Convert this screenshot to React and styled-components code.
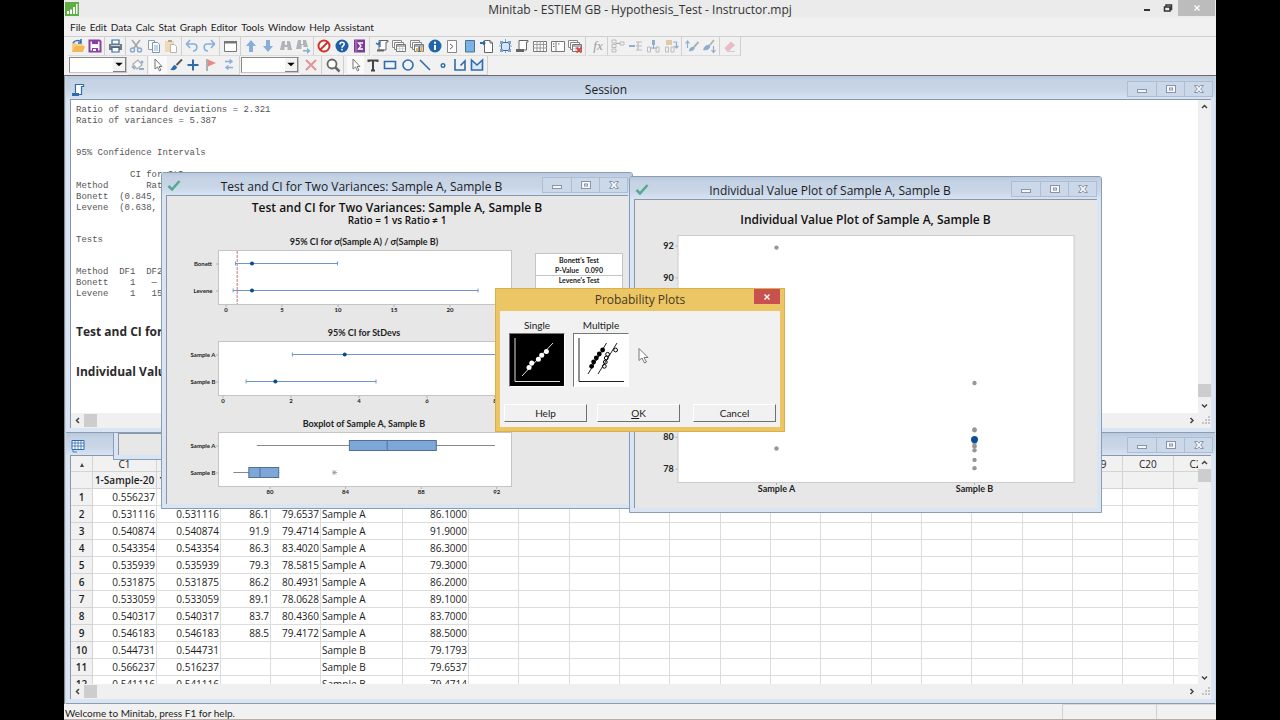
import React from "react";
import styled, { createGlobalStyle } from "styled-components";

const UI = `"Open Sans", "Noto Sans", sans-serif`;
const COMPACT = `Lato, "Open Sans", "Noto Sans", sans-serif`;

const Global = createGlobalStyle`
  * { box-sizing: border-box; }
  body { margin: 0; background: #000; font-family: ${UI}; color: #1c1c1c; }
  button, select { font-family: ${COMPACT}; color: inherit; }
`;

/* ---------- application frame ---------- */

const Screen = styled.div`
  height: 100vh;
  padding: 0 64px;
  background: #000;
`;
const Application = styled.div`
  height: 100%;
  display: flex;
  flex-direction: column;
  background: #f1f1f1;
  overflow: hidden;
`;
const TitleBar = styled.header`
  display: grid;
  grid-template-columns: 1fr auto 1fr;
  align-items: center;
  height: 18px;
  background: #ebebeb;
`;
const Logo = styled.svg`
  width: 14px;
  height: 14px;
  margin-left: 1px;
`;
const AppTitle = styled.h1`
  margin: 0;
  padding-top: 2px;
  font-size: 12px;
  line-height: 16px;
  font-weight: 400;
  color: #333;
`;
const AppControls = styled.div`
  display: flex;
  justify-content: flex-end;
  align-self: start;
`;
const AppControl = styled.button`
  width: ${(p) => (p.$close ? 37 : 21)}px;
  height: 16px;
  padding: 0;
  border: 0;
  margin-right: ${(p) => (p.$close ? 1 : 0)}px;
  background: ${(p) => (p.$close ? "#bcbcbc" : "transparent")};
  display: grid;
  place-items: center;
`;
const MenuBar = styled.nav`
  display: flex;
  height: 19px;
  padding: 0 4px;
  border-bottom: 1px solid #d0d0d0;
`;
const MenuItem = styled.button`
  padding: 0 2px;
  border: 0;
  background: none;
  font-size: 10px;
  line-height: 18px;
`;
const ToolRow = styled.div`
  display: flex;
  height: 19px;
  padding-left: 4px;
`;
const ToolGroup = styled.div`
  display: flex;
  align-items: center;
  width: ${(p) => p.$width}px;
  padding: 0 1px;
  border-right: 1px solid #cfcfcf;
  margin-right: ${(p) => (p.$end ? 2 : 0)}px;
  border-bottom: 1px solid #dcdcdc;
`;
const Tool = styled.button`
  flex: 1;
  height: 18px;
  padding: 0;
  border: 0;
  display: grid;
  place-items: center;
  background: ${(p) => (p.$active ? "#fafafa" : "transparent")};
  opacity: ${(p) => (p.$dim ? 0.5 : 1)};
  svg { width: 16px; height: 16px; display: block; }
`;
const Combo = styled.label`
  position: relative;
  display: block;
  width: 58px;
  height: 16px;
  margin: 1px 1px 0;
`;
const ComboSelect = styled.select`
  appearance: none;
  display: block;
  width: 100%;
  height: 100%;
  border: 1px solid #8a8a8a;
  border-right-color: #c4c4c4;
  border-bottom-color: #c4c4c4;
  border-radius: 0;
  background: #fff;
  font-size: 10px;
  padding: 0 14px 0 2px;
`;
const ComboArrow = styled.svg`
  position: absolute;
  right: 1px;
  top: 1px;
  width: 13px;
  height: 14px;
  background: #f3f3f3;
  border-right: 1px solid #808080;
  border-bottom: 1px solid #808080;
  pointer-events: none;
`;
const StatusBar = styled.footer`
  display: flex;
  height: 16px;
  border-bottom: 1px solid #b9ada3;
  padding-left: 1px;
  font-family: ${COMPACT};
  font-size: 10px;
  line-height: 18px;
`;
const StatusText = styled.span`
  flex: 1;
`;
const StatusCell = styled.span`
  width: ${(p) => p.$width}px;
  border-left: 1px solid #d0d0d0;
  border-top: 1px solid #d8d8d8;
`;

/* ---------- child windows ---------- */

const Desktop = styled.main`
  position: relative;
  flex: 1;
  min-height: 0;
  display: flex;
  flex-direction: column;
  border-top: 1px solid #6e6a70;
  border-left: 1px solid #8a8a90;
  padding: 0 1px 0 1px;
  background: #c9d6e6;
`;
const Frame = styled.section`
  display: flex;
  flex-direction: column;
  min-height: 0;
  background: #d9e5f2;
  border: 1px solid #8b9cb5;
  padding: 0 4px 4px;
`;
const DockedFrame = styled(Frame)`
  flex: ${(p) => p.$flex};
  border-width: 0 0 1px 0;
`;
const FloatingFrame = styled(Frame)`
  position: absolute;
  left: ${(p) => p.$left}px;
  top: ${(p) => p.$top}px;
  width: ${(p) => p.$width}px;
  height: ${(p) => p.$height}px;
  border-radius: 3px 3px 0 0;
`;
const CoveredFrame = styled(FloatingFrame)`
  border-top: 0;
  border-radius: 0;
`;
const FrameBar = styled.header`
  display: flex;
  align-items: center;
  height: ${(p) => p.$height || 23}px;
  margin: 0 -4px;
  padding: 2px ${(p) => (p.$docked ? 2 : 4)}px 0 5px;
  background: linear-gradient(#b9c8db, #c4d2e4 20%, #c7d5e7 60%, #d6e3f3);
  border-radius: 2px 2px 0 0;
`;
const FrameTitle = styled.h2`
  flex: 1;
  margin: 0;
  padding-top: 3px;
  text-align: center;
  font-size: 12px;
  line-height: 16px;
  font-weight: 400;
`;
const FrameIcon = styled.svg`
  width: 14px;
  height: 14px;
  margin-top: 2px;
`;
const FrameControls = styled.div`
  display: flex;
  height: 16px;
  border: 1px solid #adbdd4;
`;
const FrameControl = styled.button`
  width: 28px;
  padding: 0;
  border: 0;
  border-left: ${(p) => (p.$first ? 0 : 1)}px solid #adbdd4;
  background: #cbd8e9;
  display: grid;
  place-items: center;
`;
const FrameBody = styled.div`
  flex: 1;
  min-height: 0;
  display: flex;
  flex-direction: column;
  border-top: 1px solid #8b96a6;
  border-left: 1px solid #8b96a6;
  background: ${(p) => p.$bg || "#fff"};
`;
const Split = styled.div`
  flex: 1;
  min-height: 0;
  display: flex;
`;
const Rail = styled.div`
  display: flex;
  flex-direction: ${(p) => (p.$vertical ? "column" : "row")};
  align-items: center;
  justify-content: space-between;
  width: ${(p) => (p.$vertical ? "13px" : "auto")};
  height: ${(p) => (p.$vertical ? "auto" : "15px")};
  background: #f0f0f0;
`;
const RailEnd = styled.div`
  display: flex;
  flex-direction: ${(p) => (p.$vertical ? "column" : "row")};
`;
const RailButton = styled.button`
  width: 13px;
  height: ${(p) => (p.$tall ? 16 : 13)}px;
  padding: 0;
  border: 0;
  background: none;
  display: grid;
  place-items: center;
`;
const Thumb = styled.div`
  width: 13px;
  height: 13px;
  background: #cdcdcd;
`;

/* ---------- session ---------- */

const SessionText = styled.div`
  flex: 1;
  min-width: 0;
  padding: 5px 5px 0;
  overflow: hidden;
  color: #555;
`;
const Output = styled.pre`
  margin: ${(p) => p.$gap}px 0 0;
  font: 9px/11px "Liberation Mono", monospace;
`;
const OutputHeading = styled.h3`
  margin: ${(p) => p.$gap}px 0 0;
  font-size: 12px;
  line-height: 16px;
  font-weight: 700;
  color: #2b2b2b;
`;

/* ---------- worksheet ---------- */

const SheetClip = styled.div`
  flex: 1;
  min-width: 0;
  overflow: hidden;
`;
const Sheet = styled.table`
  table-layout: fixed;
  width: calc(100% + 26px);
  border-collapse: separate;
  border-spacing: 0;
  font-size: 10px;
  line-height: 16px;
`;
const Cell = styled.td`
  height: 17px;
  padding: 0 1px;
  overflow: hidden;
  white-space: nowrap;
  text-align: ${(p) => (p.$text ? "left" : "right")};
  border-right: 1px solid #dcdcdc;
  border-bottom: 1px solid #dcdcdc;
`;
const HeadCell = styled.th`
  height: ${(p) => (p.$top ? 16 : 17)}px;
  padding: ${(p) => (p.$top ? "2px 0 0" : 0)};
  overflow: hidden;
  white-space: nowrap;
  text-align: center;
  line-height: ${(p) => (p.$top ? 13 : 16)}px;
  font-weight: ${(p) => (p.$strong ? 600 : 400)};
  background: #f1f1f1;
  border-right: 1px solid #d4d4d4;
  border-bottom: 1px solid #d4d4d4;
`;
const Corner = styled.svg`
  width: 6px;
  height: 6px;
`;

/* ---------- dialog ---------- */

const Dialog = styled.div`
  position: absolute;
  left: 430px;
  top: 212px;
  width: 290px;
  display: flex;
  flex-direction: column;
  background: #ecc664;
  border: 1px solid #d9b04a;
  padding: 0 4px 4px;
`;
const DialogBar = styled.header`
  display: flex;
  height: 22px;
  padding-left: 26px;
`;
const DialogTitle = styled.h2`
  flex: 1;
  margin: 0;
  text-align: center;
  font-size: 12px;
  line-height: 22px;
  font-weight: 400;
  color: #453a1e;
`;
const DialogClose = styled.button`
  width: 26px;
  height: 15px;
  padding: 0;
  border: 0;
  background: #c8504f;
  display: grid;
  place-items: center;
`;
const DialogBody = styled.div`
  background: #f1f1f1;
  padding: 6px 4px 5px;
`;
const Choices = styled.div`
  display: flex;
  gap: 8px;
  padding-left: 5px;
`;
const Choice = styled.label`
  display: flex;
  flex-direction: column;
  align-items: center;
  width: 56px;
  font-family: ${COMPACT};
  font-size: 10px;
  line-height: 16px;
`;
const ChoiceButton = styled.button`
  width: 56px;
  height: 54px;
  padding: 0;
  border: 1px solid #777;
  border-right-color: #fff;
  border-bottom-color: #fff;
  background: ${(p) => (p.$on ? "#000" : "#fff")};
  svg { display: block; width: 54px; height: 52px; }
`;
const DialogActions = styled.div`
  display: flex;
  gap: 10px;
  margin-top: 17px;
`;
const Action = styled.button`
  width: 83px;
  height: 18px;
  padding: 0;
  border: 1px solid #fff;
  border-right-color: #707070;
  border-bottom-color: #707070;
  background: #f1f1f1;
  font-size: 10px;
  line-height: 16px;
  &:last-child { margin-left: auto; }
`;
const Pointer = styled.svg`
  position: absolute;
  left: 572px;
  top: 271px;
  width: 16px;
  height: 18px;
`;
const Chart = styled.svg`
  display: block;
  width: 100%;
  height: 100%;
  text { font-family: ${COMPACT}; font-weight: 700; fill: #222; text-anchor: middle; }
  .title { font-family: ${UI}; font-weight: 600; fill: #111; }
`;

/* ---------- icons ---------- */

const BLUE = "#2f6cad";
const PALE = "#85aedb";
const GRAY = "#666";
const line = (stroke, w = 1.3) => ({ fill: "none", stroke, strokeWidth: w });
const sheetIcon = (
  <>
    <path d="M1.500 2.500h9v7h-9z" {...line("#888", 1)} fill="#fff" />
    <path d="M3.500 4.500h9v7h-9z" {...line("#888", 1)} fill="#fff" />
    <path d="M5.500 6.500h9v7h-9z" {...line("#777", 1)} fill="#fff" />
    <path d="M6 8h8" {...line("#999", 1.500)} />
    <path d="M6 10.800h8M8.700 8v5M11.500 8v5" {...line("#bbb", 0.700)} />
  </>
);
const pointerPath = <path d="M5 2v10l2.500-2 2 4 1.500-1-2-3.500h3z" {...line("#777", 1)} fill="#fff" />;

const ICONS = {
  open: <><path d="M2 14V5h4l1 1h6v3" fill="#f7d083" /><path d="M2 14l3-6h10l-2 6z" fill="#f0b955" /><path d="M3 5c2-3 6-3 8-1M11 1v4H8" {...line(BLUE, 1.500)} /></>,
  save: <><path d="M2.500 2.500h10l1 1v10h-11z" {...line("#8a3fa6", 2)} fill="#fff" /><path d="M5 2h6v4H5zM5 10h6v4H5z" fill="#8a3fa6" /><path d="M6 11h3v2H6z" fill="#fff" /></>,
  print: <><path d="M5 2h7v4H5z" {...line(BLUE, 1.200)} fill="#fff" /><path d="M2 6h13v6H2z" fill="#777" /><path d="M4 7.500h9" {...line("#ccc", 1)} /><path d="M5 9.500h7V14H5z" {...line(BLUE, 1.200)} fill="#fff" /></>,
  cut: <><path d="M4 2l6 8M12 2l-6 8" {...line("#a5a5a5", 1.700)} /><circle cx="4.500" cy="12" r="2" {...line("#86aad0", 1.500)} /><circle cx="11.500" cy="12" r="2" {...line("#86aad0", 1.500)} /></>,
  copy: <><path d="M2.500 2.500h6v9h-6z" {...line("#8a9db3", 1)} fill="#fff" /><path d="M6.500 4.500h5l2 2v8h-7z" {...line("#7797bb", 1)} fill="#fff" /><path d="M8 8h4M8 10h4M8 12h4" {...line("#86aad0", 1)} /></>,
  paste: <><path d="M2 3h9v11H2z" fill="#f0d9b3" /><path d="M5 2h4v2H5z" fill="#aaa" /><path d="M7.500 6.500h4l2 2v6h-6z" {...line("#b5b5b5", 1)} fill="#fff" /></>,
  undo: <><path d="M3 6h7c4 0 4 7-1 7" {...line(PALE, 1.600)} /><path d="M6 2L2.500 6 6 10" {...line(PALE, 1.600)} /></>,
  redo: <><path d="M13 6H6c-4 0-4 7 1 7" {...line(PALE, 1.600)} /><path d="M10 2l3.500 4L10 10" {...line(PALE, 1.600)} /></>,
  window: <><path d="M2.500 3.500h12v10h-12z" {...line("#777", 1)} fill="#fff" /><path d="M2 3h13v2.500H2z" fill="#777" /></>,
  up: <path d="M8 2l5 6h-3v6H6V8H3z" fill={PALE} />,
  down: <path d="M8 14l5-6h-3V2H6v6H3z" fill={PALE} />,
  find: <path d="M4 3h3v4h2V3h3l2 9H9.500V9h-3v3H2z" fill="#b0b3b8" />,
  findNext: <><path d="M3 2h3v4h2V2h3l2 7H8.500V7h-2v4H1z" fill="#b0b3b8" /><path d="M8 12h4V9.500L15.500 13 12 16v-2.500H8z" fill={PALE} /></>,
  stop: <><circle cx="8" cy="8" r="5.500" {...line("#cf3329", 2)} fill="#fff" /><path d="M4 12l8-8" {...line("#cf3329", 2)} /></>,
  help: <><circle cx="8" cy="8" r="6.500" fill="#1f5fa6" /><path d="M6 6.500c0-3 4.200-3 4.200-.4C10.200 8 8 7.800 8 9.800M8 10.800v1.700" {...line("#fff", 1.600)} /></>,
  sigma: <><path d="M3 1.500h11v13H3z" fill="#7d3c98" /><path d="M5 2v12" {...line("#b78fca", 1)} /><path d="M12 5H7.500l2.500 3-2.500 3H12" {...line("#fff", 1.300)} /></>,
  session: <><path d="M5 2.500h9v1.500h-2v8H5z" {...line(GRAY, 1)} fill="#fff" /><path d="M2 5l2 1.500L6 4v5" {...line(BLUE, 1.300)} /><path d="M3 11.500h7v2H3z" fill={GRAY} /></>,
  sheets: sheetIcon,
  graphs: <>{sheetIcon}<path d="M6 9h8v4H6z" fill="#fff" /><path d="M7 14v-4h1.800v4zM11.800 14v-5h1.800v5z" fill="#e7a93b" /><path d="M9.400 14V8.500h1.800V14z" fill={BLUE} /></>,
  info: <><circle cx="8" cy="8" r="6.500" fill="#1f66ac" /><path d="M8 7v5M8 3.800v2" {...line("#fff", 2)} /></>,
  prompt: <><path d="M3.500 2.500h9v12h-9z" {...line("#888", 1)} fill="#fff" /><path d="M6 6l3 2.500L6 11" {...line(GRAY, 1)} /></>,
  book: <><path d="M3.500 2.500h9v11.500h-9z" {...line("#4a7099", 1)} fill="#7ab2e6" /></>,
  insert: <><path d="M5.500 2.500h5.500l2.500 2.500v9.500h-8z" {...line(GRAY, 1)} fill="#fff" /><path d="M11 2.500V5h2.500" {...line(GRAY, 1)} /><path d="M1 4h3V2.500L7 5 4 7.500V6H1z" fill={BLUE} /></>,
  select: <><path d="M4.500 4.500h8v8h-8z" {...line(BLUE, 1)} fill="#d5e5f5" /><path d="M3 3h3v3H3zM11 3h3v3h-3zM3 11h3v3H3zM11 11h3v3h-3z" fill="#7fa3cb" /><path d="M2 8h3M12 8h3M8.500 1v3M8.500 13v2" {...line("#7fa3cb", 1)} /></>,
  script: <><path d="M5 2.500h9v1.500h-1.500v8H5z" {...line(GRAY, 1)} fill="#fff" /><path d="M2 11h8v3H2z" fill={GRAY} /></>,
  grid: <><path d="M1.500 3.500h13v10h-13z" {...line("#777", 1)} fill="#fff" /><path d="M1 6.500h14M1 10h14M5 3v10M8.200 3v10M11.500 3v10" {...line("#999", 1)} /></>,
  pane: <><path d="M1.500 3.500h13v10h-13zM6 3.500v10" {...line("#777", 1)} fill="#fff" /><path d="M3 6h1.500M3 8.500h1.500M8 6h1.500" {...line(GRAY, 1.200)} /></>,
  closeAll: <>{sheetIcon}<path d="M9.500 9.500l5 5M14.500 9.500l-5 5" {...line("#d04545", 1.800)} /></>,
  fx: <text x="8" y="12" textAnchor="middle" fontSize="13" fontStyle="italic" fontFamily="Liberation Serif, serif" fill="#999">fx</text>,
  tree: <><path d="M2 2h4v3H2zM2 6.500h4v3H2zM2 11h4v3H2zM10 4h4v3h-4z" {...line("#888", 1)} /><path d="M6 5.500h4" {...line(BLUE, 1)} /></>,
  merge: <><path d="M1 7h6v2H1z" fill={BLUE} /><path d="M8 4h6M8 8h6M8 12h6M10 4v8" {...line("#888", 1.200)} /></>,
  branch: <><path d="M7 2h3v5H7z" fill={BLUE} /><path d="M2.500 9h3v5h-3zM11 9h3v5h-3z" {...line("#888", 1)} /><path d="M8.500 6v5M5 10h7" {...line(BLUE, 1)} /></>,
  swap: <><path d="M3 2h6v5H3z" fill="#c9a468" /><path d="M2.500 9h3v5h-3zM8 9h3v5H8z" {...line("#888", 1)} /><path d="M10 4h3.500v6M11.500 8l2 2 2-2" {...line(BLUE, 1.200)} /></>,
  brushUp: <><path d="M14.500 4L10 9" {...line("#777", 2)} /><path d="M5 13c0-3 3-5 5.500-4 1 2-2 5-5.500 4z" fill={BLUE} /><path d="M3.500 10V3.500M1.500 5.500l2-2.500 2 2.500" {...line(BLUE, 1.200)} /></>,
  brushDown: <><path d="M13 2L9 7" {...line("#777", 2)} /><path d="M2 12c1-4 4-6 7-5 1 4-3 6-7 5z" fill={BLUE} /><path d="M12.500 8v6M10.500 12l2 2.500 2-2.500" {...line(BLUE, 1.200)} /></>,
  eraser: <><path d="M2.500 10L9 3.500l4 3.500-6 6H4.500z" fill="#e58a99" /><path d="M5 13.500h8" {...line("#aaa", 1)} /></>,
  bucket: <><path d="M3 7l5-4 4 5-5 4z" {...line("#666", 1.200)} fill="#fff" /><path d="M2 9l3 3M9 12h5" {...line(BLUE, 2)} /><circle cx="12" cy="5" r="1.500" fill={BLUE} /></>,
  cursor: pointerPath,
  brush: <><path d="M14 2.500L8.500 8" {...line("#555", 2)} /><path d="M2 12.500c2 0 2-4 5-4.500l2 2c0 3-4 4-7 2.500z" fill={BLUE} /></>,
  plus: <path d="M8 2.500v11M2.500 8h11" {...line(BLUE, 2)} />,
  flag: <><path d="M4 2v12" {...line("#999", 1.500)} /><path d="M5 2.500l8 3.500-8 3.500z" fill="#e58a8a" /></>,
  exchange: <path d="M4 4.500h7M8.500 2.500l2.500 2-2.500 2M12 10.500H5M7.500 8.500L5 10.500l2.500 2" {...line(PALE, 1.400)} />,
  cross: <path d="M3 3l10 10M13 3L3 13" {...line("#e39494", 2)} />,
  zoom: <><circle cx="7" cy="7" r="4.500" {...line(GRAY, 1.800)} fill="#fff" /><path d="M10.500 10.500L14.500 14.500" {...line(GRAY, 2.500)} /></>,
  letter: <path d="M3.500 5V3.500h9V5M8 3v10.500M6 13.500h4" {...line("#444", 2)} />,
  rect: <path d="M2.500 4.500h11v7h-11z" {...line(BLUE, 1.600)} fill="#eef5fc" />,
  circle: <circle cx="8" cy="8" r="5" {...line(BLUE, 1.600)} fill="#eef5fc" />,
  slash: <path d="M3 3l10 10" {...line(BLUE, 1.600)} />,
  dot: <circle cx="8" cy="8.500" r="1.800" {...line(BLUE, 1.400)} fill="#fff" />,
  polyline: <path d="M3 2v11h10V4L8.500 8.500" {...line(BLUE, 1.600)} />,
  polygon: <path d="M2.500 3v10h11V3L8 8z" {...line(BLUE, 1.600)} fill="#dbe9f7" />,
};

const FILE_GROUPS = [
  { width: 37, tools: ["open", "save"] },
  { width: 21, tools: ["print"] },
  { width: 56, tools: ["cut", "copy", "paste"] },
  { width: 38, tools: ["undo", "redo"] },
  { width: 21, tools: ["window"] },
  { width: 73, tools: ["up", "down", "find", "findNext"] },
  { width: 56, tools: ["stop", "help", "sigma"], end: true },
  { width: 214, tools: ["session", "sheets", "graphs", "info", "prompt", "book", "insert", "select", "script", "grid", "pane", "closeAll"], end: true },
  { width: 20, tools: ["fx"] },
  { width: 74, tools: ["tree", "merge", "branch", "swap"], dim: true },
  { width: 38, tools: ["brushUp", "brushDown"], dim: true },
  { width: 21, tools: ["eraser"], dim: true },
];

function Tools({ width, tools, end, dim, active }) {
  return (
    <ToolGroup $width={width} $end={end}>
      {tools.map((name) => (
        <Tool key={name} aria-label={name} $dim={dim} $active={active === name}>
          <svg viewBox="0 0 16 16">{ICONS[name]}</svg>
        </Tool>
      ))}
    </ToolGroup>
  );
}

function ComboBox({ label }) {
  return (
    <Combo>
      <ComboSelect aria-label={label} />
      <ComboArrow viewBox="0 0 12 14"><path d="M2 5h8l-4 4z" fill="#000" /></ComboArrow>
    </Combo>
  );
}

/* ---------- window pieces ---------- */

function WindowControls() {
  const glyph = { fill: "#f4f7fb", stroke: "#8b94a6", strokeWidth: 1 };
  return (
    <FrameControls>
      <FrameControl aria-label="Minimize" $first>
        <svg width="12" height="10"><rect x="1.500" y="5.500" width="9" height="3" {...glyph} /></svg>
      </FrameControl>
      <FrameControl aria-label="Maximize">
        <svg width="12" height="10"><rect x="1.500" y="1.500" width="9" height="7" {...glyph} /><rect x="4.500" y="4" width="3" height="2" {...glyph} /></svg>
      </FrameControl>
      <FrameControl aria-label="Close">
        <svg width="12" height="10"><path d="M1.500 1.500h3L6 3.200l1.500-1.700h3L7.800 5l2.700 3.500h-3L6 6.800 4.500 8.500h-3L4.200 5z" {...glyph} /></svg>
      </FrameControl>
    </FrameControls>
  );
}

const ARROWS = {
  left: "M6 2L3.500 4.500 6 7",
  right: "M3.500 2L6 4.500 3.500 7",
  up: "M2 6l2.500-2.500L7 6",
  down: "M2 3.500L4.500 6 7 3.500",
};
function ArrowButton({ dir, tall }) {
  return (
    <RailButton aria-label={`Scroll ${dir}`} $tall={tall}>
      <svg width="9" height="9"><path d={ARROWS[dir]} {...line("#444", 1.500)} /></svg>
    </RailButton>
  );
}
function BottomRail() {
  return (
    <Rail>
      <RailEnd><ArrowButton dir="left" /><Thumb /></RailEnd>
      <RailEnd>
        <ArrowButton dir="right" />
        <svg width="13" height="13"><path d="M10 3h2M7 6h2M10 6h2M4 9h2M7 9h2M10 9h2" stroke="#c4c4c4" strokeWidth="2" /></svg>
      </RailEnd>
    </Rail>
  );
}
function SideRail({ atEnd }) {
  return (
    <Rail $vertical>
      <RailEnd $vertical><ArrowButton dir="up" />{!atEnd && <Thumb />}</RailEnd>
      <RailEnd $vertical>{atEnd && <Thumb />}<ArrowButton dir="down" tall={atEnd} /></RailEnd>
    </Rail>
  );
}
const Check = () => (
  <FrameIcon viewBox="0 0 14 14"><path d="M1.500 7L5 10.500 12.500 2" {...line("#56a98f", 2.500)} /></FrameIcon>
);

/* ---------- graphs ---------- */

function Panel({ y, title, labels, ticks, scale, children }) {
  return (
    <g transform={`translate(51 ${y})`}>
      <text x="146" y="-5" fontSize="9">{title}</text>
      <rect x="0.500" y="0.500" width="293" height="54" fill="#fff" stroke="#c4c4c4" />
      {labels.map((label, i) => (
        <g key={label}>
          <text x="-15" y={16 + i * 27} fontSize="6">{label}</text>
          <path d={`M-2 ${14 + i * 27}h2`} stroke="#b0b0b0" />
        </g>
      ))}
      {ticks.map((t) => (
        <g key={t}>
          <path d={`M${scale(t)} 55v2`} stroke="#b0b0b0" />
          <text x={scale(t)} y="62" fontSize="6">{t}</text>
        </g>
      ))}
      {children}
    </g>
  );
}
function Interval({ scale, y, from, to, at }) {
  return (
    <g>
      <path d={`M${scale(from)} ${y}H${scale(to)}M${scale(from)} ${y - 2}v4M${scale(to)} ${y - 2}v4`} stroke="#6f98c8" fill="none" />
      <circle cx={scale(at)} cy={y} r="2" fill="#0b4a8c" />
    </g>
  );
}
function Box({ scale, y, low, q1, median, q3, high }) {
  return (
    <g stroke="#55708f">
      <path d={`M${scale(low)} ${y}H${scale(high)}`} stroke="#888" />
      <rect x={scale(q1)} y={y - 5} width={scale(q3) - scale(q1)} height="10" fill="#7da7d9" />
      <path d={`M${scale(median)} ${y - 5}v10`} />
    </g>
  );
}

function VariancesChart() {
  const ratio = (v) => 8 + v * 11.2;
  const dev = (v) => 5 + v * 34;
  const value = (v) => 52 + (v - 80) * 18.9;
  const samples = ["Sample A", "Sample B"];
  return (
    <Chart viewBox="0 0 461 308" preserveAspectRatio="xMidYMin meet">
      <text className="title" x="230" y="16" fontSize="12">Test and CI for Two Variances: Sample A, Sample B</text>
      <text className="title" x="230" y="28" fontSize="10">Ratio = 1 vs Ratio ≠ 1</text>
      <Panel y={54} title="95% CI for σ(Sample A) / σ(Sample B)" labels={["Bonett", "Levene"]} ticks={[0, 5, 10, 15, 20]} scale={ratio}>
        <path d={`M${ratio(1)} 1v53`} stroke="#c07880" strokeDasharray="3 1" />
        <Interval scale={ratio} y={13.500} from={0.85} to={9.95} at={2.32} />
        <Interval scale={ratio} y={40.500} from={0.64} to={22.500} at={2.32} />
      </Panel>
      <Panel y={145} title="95% CI for StDevs" labels={samples} ticks={[0, 2, 4, 6, 8]} scale={dev}>
        <Interval scale={dev} y={13.500} from={2.04} to={8.3} at={3.58} />
        <Interval scale={dev} y={40.500} from={0.68} to={4.5} at={1.54} />
      </Panel>
      <Panel y={236} title="Boxplot of Sample A, Sample B" labels={samples} ticks={[80, 84, 88, 92]} scale={value}>
        <Box scale={value} y={13.500} low={79.3} q1={84.2} median={86.2} q3={88.8} high={91.9} />
        <Box scale={value} y={40.500} low={78.06} q1={78.88} median={79.47} q3={80.46} high={80.49} />
        <path d={`M${value(83.4) - 2} 40.500h5M${value(83.4)} 38v5M${value(83.4) - 2} 38.500l4 4M${value(83.4) + 2} 38.500l-4 4`} stroke="#999" strokeWidth="0.800" />
      </Panel>
      <rect x="368.500" y="57.500" width="87" height="46" fill="#fff" stroke="#c4c4c4" />
      <path d="M368 79.500h88" stroke="#c4c4c4" />
      <g fontSize="7">
        <text x="412" y="67">Bonett's Test</text>
        <text x="400" y="77">P-Value</text>
        <text x="427" y="77">0.090</text>
        <text x="412" y="87">Levene's Test</text>
      </g>
    </Chart>
  );
}

const SAMPLE_A = [86.1, 91.9, 86.3, 79.3, 86.2, 89.1, 83.7, 88.5];
const SAMPLE_B = [79.1793, 79.6537, 79.4714, 83.402, 78.5815, 80.4931, 78.0628, 80.436, 79.4172];

function ValuePlot() {
  const y = (v) => 46 + (92 - v) * 15.94;
  return (
    <Chart viewBox="0 0 461 308" preserveAspectRatio="xMidYMin meet">
      <text className="title" x="230" y="24" fontSize="12">Individual Value Plot of Sample A, Sample B</text>
      <rect x="42.500" y="35.500" width="396" height="247" fill="#fff" stroke="#cccccc" />
      {[92, 90, 88, 86, 84, 82, 80, 78].map((t) => (
        <g key={t}>
          <path d={`M40 ${y(t)}h2`} stroke="#b0b0b0" />
          <text x="33" y={y(t) + 3} fontSize="9">{t}</text>
        </g>
      ))}
      {[["Sample A", 141, SAMPLE_A], ["Sample B", 339, SAMPLE_B]].map(([name, x, data]) => (
        <g key={name}>
          <path d={`M${x} 283v2`} stroke="#b0b0b0" />
          <text x={x} y="292" fontSize="9">{name}</text>
          {data.map((v) => <circle key={v} cx={x} cy={y(v)} r="2.200" fill="#969696" />)}
        </g>
      ))}
      <circle cx="141" cy={y(86.4)} r="3.500" fill="#0a4f9c" />
      <circle cx="339" cy={y(79.86)} r="3.500" fill="#0a4f9c" />
    </Chart>
  );
}

/* ---------- worksheet data ---------- */

const COLUMN_WIDTHS = [22, 64, 64, 50, 50, 82, 66];
const COLUMN_NAMES = ["C1", "C2", "C3", "C4", "C5-T", "C6", "C7", "C8", "C9", "C10", "C11", "C12", "C13", "C14", "C15", "C16", "C17", "C18", "C19", "C20", "C21"];
const ROWS = [
  ["0.556237", "0.556237", "79.3", "79.1793", "Sample A", "79.3000"],
  ["0.531116", "0.531116", "86.1", "79.6537", "Sample A", "86.1000"],
  ["0.540874", "0.540874", "91.9", "79.4714", "Sample A", "91.9000"],
  ["0.543354", "0.543354", "86.3", "83.4020", "Sample A", "86.3000"],
  ["0.535939", "0.535939", "79.3", "78.5815", "Sample A", "79.3000"],
  ["0.531875", "0.531875", "86.2", "80.4931", "Sample A", "86.2000"],
  ["0.533059", "0.533059", "89.1", "78.0628", "Sample A", "89.1000"],
  ["0.540317", "0.540317", "83.7", "80.4360", "Sample A", "83.7000"],
  ["0.546183", "0.546183", "88.5", "79.4172", "Sample A", "88.5000"],
  ["0.544731", "0.544731", "", "", "Sample B", "79.1793"],
  ["0.566237", "0.516237", "", "", "Sample B", "79.6537"],
  ["0.541116", "0.541116", "", "", "Sample B", "79.4714"],
];

function Worksheet() {
  return (
    <Sheet>
      <colgroup>
        {["row", ...COLUMN_NAMES].map((c, i) => <col key={c} width={COLUMN_WIDTHS[i]} />)}
      </colgroup>
      <thead>
        <tr>
          <HeadCell $top><Corner viewBox="0 0 6 6"><path d="M3 1l2 4H1z" fill="#444" /></Corner></HeadCell>
          {COLUMN_NAMES.map((c) => <HeadCell key={c} $top>{c}</HeadCell>)}
        </tr>
        <tr>
          <HeadCell />
          {COLUMN_NAMES.map((c, i) => <HeadCell key={c} $strong>{i < 2 ? "1-Sample-20" : "\u00a0"}</HeadCell>)}
        </tr>
      </thead>
      <tbody>
        {ROWS.map((row, r) => (
          <tr key={r}>
            <HeadCell scope="row" $strong>{r + 1}</HeadCell>
            {COLUMN_NAMES.map((c, i) => <Cell key={c} $text={i === 4}>{row[i]}</Cell>)}
          </tr>
        ))}
      </tbody>
    </Sheet>
  );
}

/* ---------- page ---------- */

const MENUS = ["File", "Edit", "Data", "Calc", "Stat", "Graph", "Editor", "Tools", "Window", "Help", "Assistant"];

export default function App() {
  return (
    <Screen>
      <Global />
      <Application>
        <TitleBar>
          <Logo viewBox="0 0 14 14">
            <rect width="14" height="14" fill="#5fae45" />
            <path d="M2 9h2v3H2zM5 7.500h2V12H5zM8 5h2v7H8zM11 2h1.500v10H11z" fill="#fff" />
          </Logo>
          <AppTitle>Minitab - ESTIEM GB - Hypothesis_Test - Instructor.mpj</AppTitle>
          <AppControls>
            <AppControl aria-label="Minimize"><svg width="10" height="8"><path d="M2 6h6" stroke="#333" strokeWidth="2" /></svg></AppControl>
            <AppControl aria-label="Restore"><svg width="10" height="8"><path d="M1.500 3h5.500v4H1.500zM3 3V1h5.500v4.500H7" {...line("#333", 1.500)} /></svg></AppControl>
            <AppControl aria-label="Close" $close><svg width="8" height="8"><path d="M1.500 1.500l5 5M6.500 1.500l-5 5" {...line("#fff", 1.300)} /></svg></AppControl>
          </AppControls>
        </TitleBar>
        <MenuBar>{MENUS.map((m) => <MenuItem key={m}>{m}</MenuItem>)}</MenuBar>
        <ToolRow>{FILE_GROUPS.map((g) => <Tools key={g.tools[0]} {...g} />)}</ToolRow>
        <ToolRow>
          <ComboBox label="Fill pattern" />
          <Tools width={20} tools={["bucket"]} dim />
          <Tools width={92} tools={["cursor", "brush", "plus", "flag", "exchange"]} active="cursor" />
          <ComboBox label="Item" />
          <Tools width={22} tools={["cross"]} />
          <Tools width={22} tools={["zoom"]} end />
          <Tools width={142} tools={["cursor", "letter", "rect", "circle", "slash", "dot", "polyline", "polygon"]} active="cursor" />
        </ToolRow>

        <Desktop>
          <DockedFrame $flex="0 0 357px">
            <FrameBar $docked>
              <FrameIcon viewBox="0 0 14 14">
                <path d="M4.500 1.500h8v2h-2v8h-6z" {...line(BLUE, 1.200)} fill="#fff" />
                <path d="M1 10h7v3H1z" fill={BLUE} />
              </FrameIcon>
              <FrameTitle>Session</FrameTitle>
              <WindowControls />
            </FrameBar>
            <FrameBody>
              <Split>
                <SessionText>
                  <Output $gap={0}>{"Ratio of standard deviations = 2.321\nRatio of variances = 5.387"}</Output>
                  <Output $gap={21}>95% Confidence Intervals</Output>
                  <Output $gap={11}>{"          CI for StDev\nMethod       Ratio\nBonett  (0.845, 9.951)\nLevene  (0.638, 22.475)"}</Output>
                  <Output $gap={21}>Tests</Output>
                  <Output $gap={21}>{"Method  DF1  DF2\nBonett    1   —\nLevene    1   15"}</Output>
                  <OutputHeading $gap={24}>Test and CI for Two Variances: Sample A, Sample B</OutputHeading>
                  <OutputHeading $gap={24}>Individual Value Plot of Sample A, Sample B</OutputHeading>
                </SessionText>
                <SideRail atEnd />
              </Split>
              <BottomRail />
            </FrameBody>
          </DockedFrame>

          <DockedFrame $flex="1 1 0">
            <FrameBar $height={22} $docked>
              <FrameIcon viewBox="0 0 14 14">
                <path d="M1 1.500h12v9H1z" {...line(BLUE, 1)} fill="#fff" />
                <path d="M1 4h12M1 7h12M4 1v10M7 1v10M10 1v10M2 11v2h4" {...line(BLUE, 0.800)} />
              </FrameIcon>
              <FrameTitle />
              <WindowControls />
            </FrameBar>
            <FrameBody>
              <Split>
                <SheetClip><Worksheet /></SheetClip>
                <SideRail />
              </Split>
              <BottomRail />
            </FrameBody>
          </DockedFrame>

          <CoveredFrame $left={48} $top={357} $width={472} $height={27}>
            <FrameBody $bg="#e7e7e7" />
          </CoveredFrame>

          <FloatingFrame $left={96} $top={96} $width={472} $height={337}>
            <FrameBar $height={22}>
              <Check />
              <FrameTitle>Test and CI for Two Variances: Sample A, Sample B</FrameTitle>
              <WindowControls />
            </FrameBar>
            <FrameBody $bg="#e7e7e7"><VariancesChart /></FrameBody>
          </FloatingFrame>

          <FloatingFrame $left={564} $top={100} $width={473} $height={337}>
            <FrameBar $height={22}>
              <Check />
              <FrameTitle>Individual Value Plot of Sample A, Sample B</FrameTitle>
              <WindowControls />
            </FrameBar>
            <FrameBody $bg="#e7e7e7"><ValuePlot /></FrameBody>
          </FloatingFrame>

          <Dialog role="dialog" aria-label="Probability Plots">
            <DialogBar>
              <DialogTitle>Probability Plots</DialogTitle>
              <DialogClose aria-label="Close">
                <svg width="8" height="8"><path d="M1.500 1.500l5 5M6.500 1.500l-5 5" {...line("#fff", 1.400)} /></svg>
              </DialogClose>
            </DialogBar>
            <DialogBody>
              <Choices>
                <Choice>
                  Single
                  <ChoiceButton $on aria-pressed="true">
                    <svg viewBox="1 1 54 52">
                      <path d="M6 5v43.500h45M13 43l31-33" {...line("#ddd", 1)} />
                      {[[20, 34.5], [22.7, 30], [29.4, 26.3], [32.7, 22.3], [37.4, 18.4]].map(([x, y]) => <circle key={x} cx={x} cy={y} r="2.500" fill="#fff" />)}
                    </svg>
                  </ChoiceButton>
                </Choice>
                <Choice>
                  Multiple
                  <ChoiceButton aria-pressed="false">
                    <svg viewBox="1 1 54 52">
                      <path d="M6 5v43.500h45M15 41l18.500-31M25 41l19-31" {...line("#222", 1)} />
                      {[[18.6, 33.3], [20.6, 29], [23.3, 25], [26.3, 21], [29.6, 17]].map(([x, y]) => <circle key={x} cx={x} cy={y} r="2.400" fill="#000" />)}
                      {[[31.3, 33.3], [32.3, 29], [33.3, 25], [34.6, 21.3], [42.6, 17]].map(([x, y]) => <circle key={x} cx={x} cy={y} r="1.900" {...line("#000", 1)} />)}
                    </svg>
                  </ChoiceButton>
                </Choice>
              </Choices>
              <DialogActions>
                <Action>Help</Action>
                <Action><u>O</u>K</Action>
                <Action>Cancel</Action>
              </DialogActions>
            </DialogBody>
          </Dialog>
          <Pointer viewBox="0 0 16 18"><path d="M2 1.500v12l3-2.500 2.500 5 2-1L7 10.500h4z" {...line("#777", 1)} fill="#fff" /></Pointer>
        </Desktop>

        <StatusBar>
          <StatusText>Welcome to Minitab, press F1 for help.</StatusText>
          <StatusCell $width={94} />
          <StatusCell $width={60} />
        </StatusBar>
      </Application>
    </Screen>
  );
}
